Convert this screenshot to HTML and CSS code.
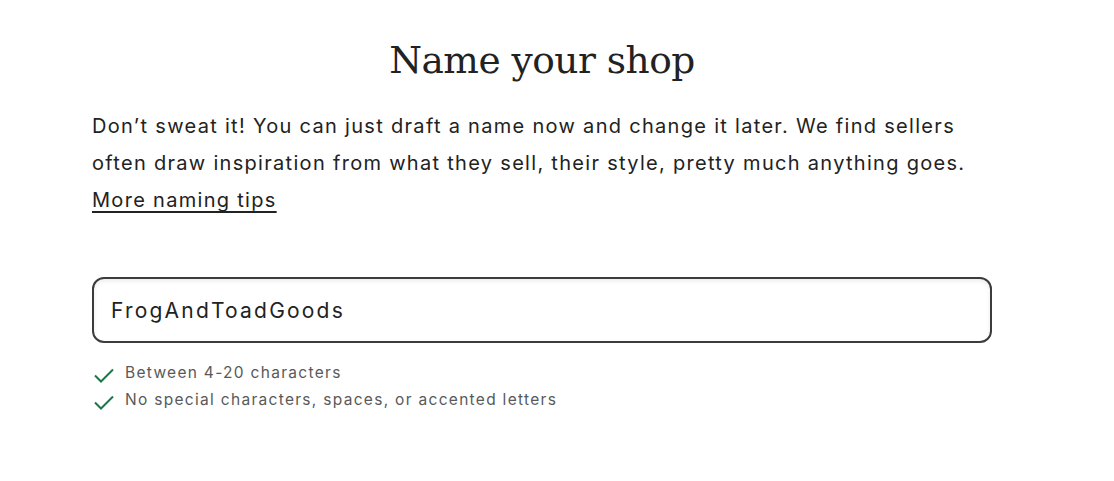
FILE: index.html
```html
<!DOCTYPE html>
<html lang="en">
<head>
<meta charset="utf-8">
<title>Name your shop</title>
<link rel="stylesheet" href="styles.css">
</head>
<body>
<main class="page">
  <section class="content">
    <h1 class="title">Name your shop</h1>
    <p class="intro">Don’t sweat it! You can just draft a name now and change it later. We find sellers often draw inspiration from what they sell, their style, pretty much anything goes. <a class="tips" href="#">More naming tips</a></p>
    <div class="field">
      <input class="shop-input" type="text" value="FrogAndToadGoods">
    </div>
    <ul class="rules">
      <li class="rule">
        <svg class="check" viewBox="0 0 24 24" width="24" height="24"><path d="M3 11.5 L9 17.5 L21 5.5" fill="none" stroke="#1c7747" stroke-width="2"/></svg>
        <span>Between 4-20 characters</span>
      </li>
      <li class="rule">
        <svg class="check" viewBox="0 0 24 24" width="24" height="24"><path d="M3 11.5 L9 17.5 L21 5.5" fill="none" stroke="#1c7747" stroke-width="2"/></svg>
        <span>No special characters, spaces, or accented letters</span>
      </li>
    </ul>
  </section>
</main>
</body>
</html>
```
FILE: styles.css
```css
html, body {
  margin: 0;
  padding: 0;
  background: #fff;
}
.page {
  padding: 30px 0 0 92px;
}
.content {
  width: 900px;
  display: flex;
  flex-direction: column;
}
.title {
  margin: 0;
  text-align: center;
  font-family: "DejaVu Serif", serif;
  font-weight: 300;
  font-size: 37.5px;
  line-height: 60px;
  color: #222;
  letter-spacing: -0.5px;
}
.intro {
  margin: 18px 0 0 0;
  font-family: "Inter", sans-serif;
  font-size: 20px;
  line-height: 37px;
  color: #222;
  letter-spacing: 1.3px;
}
.tips {
  color: #222;
  text-decoration: underline;
  text-underline-offset: 4px;
}
.field {
  margin-top: 58px;
}
.shop-input {
  box-sizing: border-box;
  width: 900px;
  height: 66px;
  border: 2px solid #3c3c3c;
  border-radius: 12px;
  padding: 0 17px;
  font-family: "Inter", sans-serif;
  font-size: 21px;
  letter-spacing: 2.2px;
  color: #222;
  box-shadow: inset 0 2px 4px rgba(0,0,0,0.08);
  outline: none;
  background: #fff;
}
.rules {
  list-style: none;
  margin: 16px 0 0 0;
  padding: 0;
}
.rule {
  display: flex;
  align-items: center;
  gap: 9px;
  height: 27px;
  font-family: "Inter", sans-serif;
  font-size: 15.5px;
  color: #595959;
  letter-spacing: 1.3px;
}
.check {
  flex: none;
  margin-top: 6px;
}
```
